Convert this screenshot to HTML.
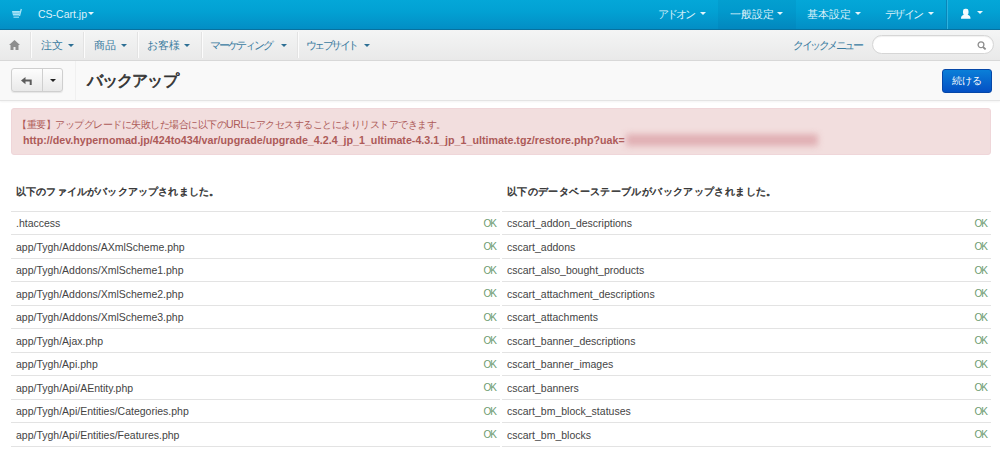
<!DOCTYPE html>
<html><head><meta charset="utf-8">
<style>
*{box-sizing:border-box;margin:0;padding:0}
html,body{width:1000px;height:449px;overflow:hidden;background:#fff;font-family:"Liberation Sans",sans-serif;color:#333}
.abs{position:absolute;white-space:nowrap}
#top{position:absolute;left:0;top:0;width:1000px;height:30px;background:linear-gradient(#04a7d8,#02a1d3 40%,#038ec5);border-bottom:1px solid #07719f}
#top .t{position:absolute;top:0;line-height:29px;font-size:11px;color:#dcf1fa}
.caret{position:absolute;width:0;height:0;border-left:3.3px solid transparent;border-right:3.3px solid transparent;border-top:3.3px solid #e3f5fc}
#nav{position:absolute;left:0;top:30px;width:1000px;height:31px;background:linear-gradient(#f4f5f5,#e9e9e9);border-bottom:1px solid #d8d8d8}
#nav .t{position:absolute;top:0;line-height:30px;font-size:11px;color:#3a7ba0}
#nav .caret{border-top-color:#2d6f94}
.sep{position:absolute;top:2px;width:2px;height:26px;border-left:1px solid #e3e3e3;border-right:1px solid #fcfcfc}
#hdr{position:absolute;left:0;top:61px;width:1000px;height:40px;background:#f9f9f9;border-bottom:1px solid #e4e4e4;box-shadow:0 1px 2px rgba(0,0,0,.05)}
.btng{position:absolute;left:11px;top:7px;width:52px;height:24px;border:1px solid #cfcfcf;border-radius:3px;background:linear-gradient(#fdfdfd,#e9e9e9);box-shadow:0 1px 1px rgba(0,0,0,.08)}
.btng .d{position:absolute;left:30px;top:0;width:1px;height:22px;background:#cfcfcf}
#title{position:absolute;left:87px;top:0;line-height:39px;font-size:16px;letter-spacing:-.9px;font-weight:normal;color:#333;-webkit-text-stroke:.7px #333}
#cont{position:absolute;left:942px;top:8px;width:50px;height:24px;border-radius:3px;background:linear-gradient(#0a7fd8,#0450c4);border:1px solid #0547a8;color:#fff;font-size:10px;text-align:center;line-height:22px}
#alert{position:absolute;left:11px;top:108px;width:980px;height:47px;background:#f2dede;border:1px solid #efd6d9;border-radius:3px;color:#ad5a58}
#alert .l1{position:absolute;left:5px;top:7.5px;font-size:9.5px;letter-spacing:-.5px;line-height:14px}
#alert .l2{position:absolute;left:11px;top:24px;font-size:10.7px;line-height:14px;font-weight:bold}
#alert .blur{position:absolute;left:614px;top:25px;width:192px;height:12px;background:#dda5aa;filter:blur(3px);opacity:.8}
h4{position:absolute;top:184px;font-size:10.2px;font-weight:normal;line-height:16px;color:#333;-webkit-text-stroke:.45px #333}
table{position:absolute;top:211px;border-collapse:collapse;width:489px;font-size:10.5px;color:#444}
tr:nth-child(odd) td{height:23px}tr:nth-child(even) td{height:24px}td{border-top:1px solid #e3e3e3;padding:0 5px;vertical-align:middle;white-space:nowrap}
td.ok{text-align:right;color:#6b9b6f;font-size:10px;letter-spacing:-1px;padding-right:4px}
</style></head><body>
<div id="top">
  <svg class="abs" style="left:11px;top:8px" width="11" height="11" viewBox="0 0 11 11"><path d="M1 3h8l-.8 4.5H2z" fill="#a6e3f7"/><path d="M2 5.2h6.5" stroke="#4cc0e8" stroke-width=".8"/><path d="M8.5 7.8L10.3 1" stroke="#a6e3f7" stroke-width="1.3"/><path d="M2.5 9.2h5.5" stroke="#8fdaf3" stroke-width="1.3"/></svg>
  <div id="m_cs" class="t" style="left:38px;font-size:10.5px">CS-Cart.jp</div>
  <div class="caret" style="left:88px;top:11.5px"></div>
  <div style="position:absolute;left:718px;top:0;width:78px;height:29px;background:rgba(0,60,110,.07)"></div>
  <div id="m_addon" class="t" style="left:658px;letter-spacing:-2px">アドオン</div><div class="caret" style="left:700px;top:11.5px"></div>
  <div id="m_gen" class="t" style="left:730px">一般設定</div><div class="caret" style="left:777px;top:11.5px"></div>
  <div id="m_basic" class="t" style="left:807px">基本設定</div><div class="caret" style="left:855px;top:11.5px"></div>
  <div id="m_design" class="t" style="left:885px;letter-spacing:-1.6px">デザイン</div><div class="caret" style="left:928px;top:11.5px"></div>
  <div style="position:absolute;left:946px;top:0;width:2px;height:29px;border-left:1px solid #0a86b8;border-right:1px solid #2cb3e0"></div>
  <svg class="abs" style="left:960px;top:8px" width="12" height="12" viewBox="0 0 12 12"><rect x="3" y="0.7" width="5.5" height="6.5" rx="2.2" fill="#f4fbfe"/><path d="M1 10.7c0-2.5 1-3.6 3-3.9h3.5c2 .3 3 1.4 3 3.9z" fill="#f4fbfe"/></svg>
  <div class="caret" style="left:976.5px;top:11px;border-left-width:3.3px;border-right-width:3.3px;border-top-width:3px;border-top-color:#e8f7fd"></div>
</div>
<div id="nav">
  <svg class="abs" style="left:9px;top:10px" width="11" height="10" viewBox="0 0 11 10"><path d="M5.5 0L0 5h1.5v5h3V7h2v3h3V5H11z" fill="#8e8e8e"/></svg>
  <div class="sep" style="left:30px"></div>
  <div id="m_order" class="t" style="left:41px">注文</div><div class="caret" style="left:68px;top:13.5px"></div>
  <div class="sep" style="left:83px"></div>
  <div id="m_prod" class="t" style="left:94px">商品</div><div class="caret" style="left:121px;top:13.5px"></div>
  <div class="sep" style="left:137px"></div>
  <div id="m_cust" class="t" style="left:147px">お客様</div><div class="caret" style="left:184px;top:13.5px"></div>
  <div class="sep" style="left:201px"></div>
  <div id="m_mkt" class="t" style="left:210px;letter-spacing:-2.2px">マーケティング</div><div class="caret" style="left:281px;top:13.5px"></div>
  <div class="sep" style="left:297px"></div>
  <div id="m_web" class="t" style="left:306px;letter-spacing:-2.6px">ウェブサイト</div><div class="caret" style="left:364px;top:13.5px"></div>
  <div id="m_quick" class="t" style="left:793px;letter-spacing:-2.5px">クイックメニュー</div>
  <div style="position:absolute;left:872px;top:5px;width:122px;height:19px;border:1px solid #d6d6d6;border-radius:10px;background:#fff;box-shadow:inset 0 1px 1px rgba(0,0,0,.06)"></div>
  <svg class="abs" style="left:976.5px;top:10.5px" width="10" height="9" viewBox="0 0 10 9"><circle cx="4" cy="3.8" r="2.9" fill="none" stroke="#8c8c8c" stroke-width="1.3"/><path d="M6 6L8.6 8.4" stroke="#8c8c8c" stroke-width="1.8"/></svg>
</div>
<div id="hdr">
  <div class="btng"><div class="d"></div>
    <svg class="abs" style="left:9px;top:7.5px" width="12" height="9" viewBox="0 0 12 9"><path d="M4.5 0L0 3.6 4.5 7.2V4.6h4.2V8h2V2.6H4.5z" fill="#5c5c5c"/></svg>
    <div class="caret" style="left:37.5px;top:9.5px;border-top-color:#222;border-left-width:3px;border-right-width:3px"></div>
  </div>
  <div style="position:absolute;left:75px;top:0;width:1px;height:39px;background:#f0f0f0"></div>
  <div id="title"><span id="m_title">バックアップ</span></div>
  <div id="cont"><span id="m_cont">続ける</span></div>
</div>
<div id="alert">
  <div id="m_l1" class="abs l1">【重要】アップグレードに失敗した場合に以下の<span style="font-size:10.5px;letter-spacing:-.3px">URL</span>にアクセスすることによりリストアできます。</div>
  <div id="m_l2" class="abs l2">http://dev.hypernomad.jp/424to434/var/upgrade/upgrade_4.2.4_jp_1_ultimate-4.3.1_jp_1_ultimate.tgz/restore.php?uak=</div>
  <div class="blur"></div>
</div>
<h4 id="m_h1" style="left:16px;letter-spacing:.16px">以下のファイルがバックアップされました。</h4>
<h4 id="m_h2" style="left:507px;letter-spacing:.37px">以下のデータベーステーブルがバックアップされました。</h4>
<table style="left:11px">
<tr><td><span id="m_ht">.htaccess</span></td><td class="ok">OK</td></tr>
<tr><td>app/Tygh/Addons/AXmlScheme.php</td><td class="ok">OK</td></tr>
<tr><td>app/Tygh/Addons/XmlScheme1.php</td><td class="ok">OK</td></tr>
<tr><td>app/Tygh/Addons/XmlScheme2.php</td><td class="ok">OK</td></tr>
<tr><td>app/Tygh/Addons/XmlScheme3.php</td><td class="ok">OK</td></tr>
<tr><td>app/Tygh/Ajax.php</td><td class="ok">OK</td></tr>
<tr><td>app/Tygh/Api.php</td><td class="ok">OK</td></tr>
<tr><td>app/Tygh/Api/AEntity.php</td><td class="ok">OK</td></tr>
<tr><td>app/Tygh/Api/Entities/Categories.php</td><td class="ok">OK</td></tr>
<tr><td>app/Tygh/Api/Entities/Features.php</td><td class="ok">OK</td></tr>
<tr><td>app/Tygh/Api/Entities/Languages.php</td><td class="ok">OK</td></tr>
</table>
<table style="left:502px">
<tr><td><span id="m_cad">cscart_addon_descriptions</span></td><td class="ok"><span id="m_ok2">OK</span></td></tr>
<tr><td>cscart_addons</td><td class="ok">OK</td></tr>
<tr><td>cscart_also_bought_products</td><td class="ok">OK</td></tr>
<tr><td>cscart_attachment_descriptions</td><td class="ok">OK</td></tr>
<tr><td>cscart_attachments</td><td class="ok">OK</td></tr>
<tr><td>cscart_banner_descriptions</td><td class="ok">OK</td></tr>
<tr><td>cscart_banner_images</td><td class="ok">OK</td></tr>
<tr><td>cscart_banners</td><td class="ok">OK</td></tr>
<tr><td>cscart_bm_block_statuses</td><td class="ok">OK</td></tr>
<tr><td>cscart_bm_blocks</td><td class="ok">OK</td></tr>
<tr><td>cscart_bm_blocks_descriptions</td><td class="ok">OK</td></tr>
</table>
</body></html>
